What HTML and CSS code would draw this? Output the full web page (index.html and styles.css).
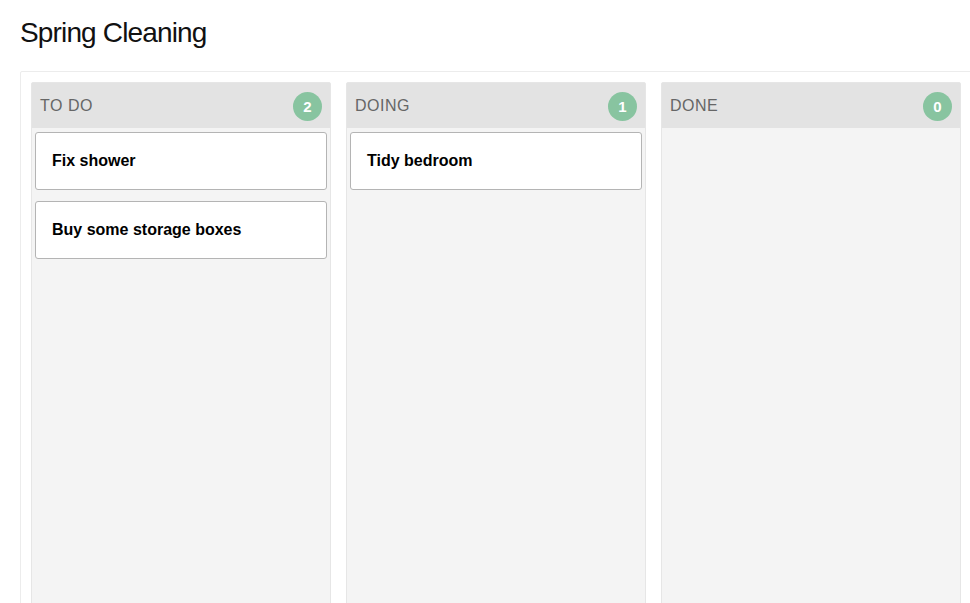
FILE: index.html
```html
<!DOCTYPE html>
<html>
<head>
<meta charset="utf-8">
<title>Spring Cleaning</title>
<link rel="stylesheet" href="styles.css">
</head>
<body>
<h1 class="title">Spring Cleaning</h1>
<div class="board">
  <section class="column">
    <header class="column-head">
      <span class="column-name">TO DO</span>
      <span class="badge">2</span>
    </header>
    <div class="cards">
      <div class="card">Fix shower</div>
      <div class="card">Buy some storage boxes</div>
    </div>
  </section>
  <section class="column">
    <header class="column-head">
      <span class="column-name">DOING</span>
      <span class="badge">1</span>
    </header>
    <div class="cards">
      <div class="card">Tidy bedroom</div>
    </div>
  </section>
  <section class="column">
    <header class="column-head">
      <span class="column-name">DONE</span>
      <span class="badge">0</span>
    </header>
    <div class="cards"></div>
  </section>
</div>
</body>
</html>
```
FILE: styles.css
```css
html, body {
  margin: 0;
  padding: 0;
  background: #fff;
  overflow: hidden;
}
body {
  font-family: "Liberation Sans", Arial, Helvetica, sans-serif;
  color: #000;
  padding: 0 0 0 20px;
  width: 1000px;
}
.title {
  margin: 17px 0 22px 0;
  font-size: 28px;
  line-height: 32px;
  font-weight: normal;
  letter-spacing: -0.85px;
  color: #111;
}
.board {
  display: flex;
  gap: 15px;
  padding: 10px;
  border: 1px solid #ececec;
  border-radius: 2px;
  width: 930px;
  height: 600px;
  box-sizing: content-box;
}
.column {
  width: 300px;
  flex: 0 0 300px;
  box-sizing: border-box;
  background: #f4f4f4;
  border: 1px solid #e6e6e6;
  border-radius: 2px;
  display: flex;
  flex-direction: column;
}
.column-head {
  height: 45px;
  background: #e3e3e3;
  display: flex;
  align-items: center;
  justify-content: space-between;
  padding: 0 8px 0 8px;
}
.column-name {
  font-size: 16px;
  letter-spacing: 0.5px;
  color: #666;
}
.badge {
  width: 29px;
  height: 29px;
  border-radius: 50%;
  background: #88c4a0;
  color: #fff;
  font-weight: bold;
  font-size: 15px;
  display: flex;
  align-items: center;
  justify-content: center;
  margin-top: 1px;
}
.cards {
  display: flex;
  flex-direction: column;
  gap: 11px;
  padding: 4px 3px;
}
.card {
  background: #fff;
  border: 1px solid #b4b4b4;
  border-radius: 3px;
  padding: 16px 16px;
  font-size: 16px;
  line-height: 24px;
  font-weight: bold;
}
```
